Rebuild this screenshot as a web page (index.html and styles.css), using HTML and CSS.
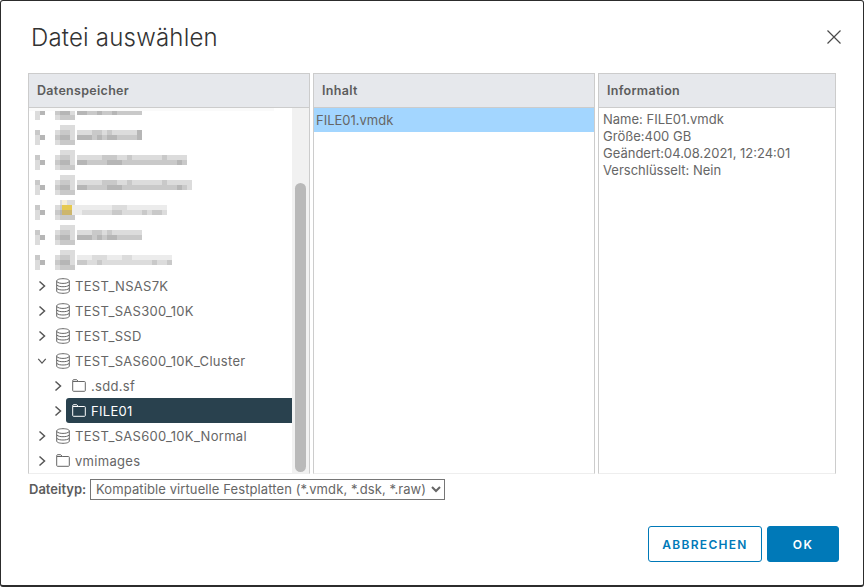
FILE: index.html
```
<!DOCTYPE html>
<html lang="de">
<head>
<meta charset="utf-8">
<title>Datei auswählen</title>
<link rel="stylesheet" href="styles.css">
</head>
<body>
<svg class="defs" width="0" height="0" aria-hidden="true">
  <symbol id="ico-chev" viewBox="0 0 10 12"><path class="stroke" d="M2.500 1.500 7.500 6 2.500 10.500"/></symbol>
  <symbol id="ico-chev-down" viewBox="0 0 12 10"><path class="stroke" d="M1.500 2.500 6 7.500 10.500 2.500"/></symbol>
  <symbol id="ico-db" viewBox="0 0 14 16"><path class="stroke-thin" d="M.7 3C.7 1.500 3.500.7 7 .7s6.300.8 6.300 2.300v10c0 1.500-2.800 2.300-6.300 2.300S.7 14.500.7 13zM.7 3.500C2 5 4.500 5.400 7 5.400s5-.4 6.300-1.900M.7 7C2.300 8.400 4.500 8.700 7 8.700s4.700-.3 6.300-1.700M.7 10.300C2.300 11.700 4.500 12 7 12s4.700-.3 6.300-1.700"/></symbol>
  <symbol id="ico-folder" viewBox="0 0 14 13"><path class="stroke-thin" d="M.7 2.500V1.700C.7 1 1.100.7 1.700.7h3L6.300 2.500h6.200c.5 0 .8.300.8.800v8.200c0 .5-.3.800-.8.800H1.500c-.5 0-.8-.3-.8-.8zM.7 2.500h5.600"/></symbol>
  <symbol id="blur-head" viewBox="0 0 40 20">
    <path class="m1" d="M0 5h5v15H0zM20 5h20v15H20zM25 0h15v5H25z"/>
    <path class="m2" d="M0 5h5v5H0zM5 10h5v5H5zM25 5h10v5H25zM20 10h15v5H20zM25 15h15v5H25z"/>
    <path class="m3" d="M5 10h5v5H5zM25 10h10v5H25z"/>
  </symbol>
</svg>

<main class="dialog">
  <header class="dialog-head">
    <h1 class="dialog-title">Datei auswählen</h1>
    <button class="close" type="button" aria-label="Schließen">
      <svg width="16" height="16" viewBox="0 0 16 16"><path class="stroke-close" d="M1.500 1.500 14.500 14.500M14.500 1.500 1.500 14.500"/></svg>
    </button>
  </header>

  <section class="panels">
    <div class="panel panel-tree">
      <div class="panel-head">Datenspeicher</div>
      <div class="panel-body tree-body">
        <div class="tree-strip"></div>
        <ul class="tree">
          <li class="blur-row">
            <svg width="160" height="25" viewBox="0 0 160 25">
              <use href="#blur-head" x="0" y="2" width="40" height="20"/>
              <path class="m1" d="M42 7h65v10H42z"/><path class="m2" d="M42 12h65v5H42zM52 7h15v5H52z"/><path class="m3" d="M42 12h10v5H42zM62 12h5v5H62zM77 7h5v10H77z"/>
            </svg>
          </li>
          <li class="blur-row">
            <svg width="160" height="25" viewBox="0 0 160 25">
              <use href="#blur-head" x="0" y="2" width="40" height="20"/>
              <path class="m1" d="M42 7h65v10H42z"/><path class="m2" d="M42 12h65v5H42zM57 7h10v5H57zM72 7h5v5H72z"/><path class="m3" d="M42 12h15v5H42zM62 12h5v5H62zM72 12h10v5H72zM102 7h5v10H102z"/>
            </svg>
          </li>
          <li class="blur-row">
            <svg width="160" height="25" viewBox="0 0 160 25">
              <use href="#blur-head" x="0" y="2" width="40" height="20"/>
              <path class="m1" d="M42 7h110v10H42z"/><path class="m2" d="M42 12h110v5H42zM67 7h15v5H67zM92 7h5v5H92zM127 7h5v5H127z"/><path class="m3" d="M42 12h10v5H42zM72 12h15v5H72zM142 12h5v5H142z"/>
            </svg>
          </li>
          <li class="blur-row">
            <svg width="160" height="25" viewBox="0 0 160 25">
              <use href="#blur-head" x="0" y="2" width="40" height="20"/>
              <path class="m1" d="M42 7h115v10H42z"/><path class="m2" d="M42 12h110v5H42zM67 7h15v5H67zM92 7h5v5H92zM127 7h5v5H127z"/><path class="m3" d="M42 12h10v5H42zM72 12h15v5H72zM142 12h5v5H142z"/>
            </svg>
          </li>
          <li class="blur-row">
            <svg width="160" height="25" viewBox="0 0 160 25">
              <use href="#blur-head" x="0" y="2" width="40" height="20"/>
              <path class="y0" d="M27 2h5v5H27z"/><path class="y1" d="M27 7h10v5H27z"/><path class="y2" d="M27 12h10v5H27z"/>
              <path class="m0" d="M37 7h95v10H37z"/><path class="m1" d="M47 12h85v5H47zM77 7h15v5H77z"/><path class="m2" d="M107 12h5v5H107zM77 12h10v5H77zM117 12h10v5H117z"/>
            </svg>
          </li>
          <li class="blur-row">
            <svg width="160" height="25" viewBox="0 0 160 25">
              <use href="#blur-head" x="0" y="2" width="40" height="20"/>
              <path class="m1" d="M42 7h65v10H42z"/><path class="m2" d="M42 12h65v5H42zM57 7h10v5H57zM72 7h5v5H72z"/><path class="m3" d="M42 12h15v5H42zM62 12h5v5H62zM72 12h10v5H72z"/>
            </svg>
          </li>
          <li class="blur-row">
            <svg width="160" height="25" viewBox="0 0 160 25">
              <use href="#blur-head" x="0" y="2" width="40" height="20"/>
              <path class="m0" d="M42 7h95v10H42z"/><path class="m1" d="M42 12h95v5H42zM57 7h15v5H57zM87 7h10v5H87z"/><path class="m2" d="M42 12h10v5H42zM62 12h5v5H62zM117 12h5v5H117zM132 12h5v5H132z"/>
            </svg>
          </li>
          <li class="row"><svg class="chev"><use href="#ico-chev"/></svg><svg class="db"><use href="#ico-db"/></svg><span>TEST_NSAS7K</span></li>
          <li class="row"><svg class="chev"><use href="#ico-chev"/></svg><svg class="db"><use href="#ico-db"/></svg><span>TEST_SAS300_10K</span></li>
          <li class="row"><svg class="chev"><use href="#ico-chev"/></svg><svg class="db"><use href="#ico-db"/></svg><span>TEST_SSD</span></li>
          <li class="row"><svg class="chev"><use href="#ico-chev-down"/></svg><svg class="db"><use href="#ico-db"/></svg><span>TEST_SAS600_10K_Cluster</span></li>
          <li class="row row-child"><svg class="chev"><use href="#ico-chev"/></svg><svg class="folder"><use href="#ico-folder"/></svg><span>.sdd.sf</span></li>
          <li class="row row-child"><svg class="chev"><use href="#ico-chev"/></svg><div class="selected"><svg class="folder"><use href="#ico-folder"/></svg><span>FILE01</span></div></li>
          <li class="row"><svg class="chev"><use href="#ico-chev"/></svg><svg class="db"><use href="#ico-db"/></svg><span>TEST_SAS600_10K_Normal</span></li>
          <li class="row"><svg class="chev"><use href="#ico-chev"/></svg><svg class="folder"><use href="#ico-folder"/></svg><span>vmimages</span></li>
        </ul>
        <div class="scrollbar"><div class="thumb"></div></div>
      </div>
    </div>

    <div class="panel panel-content">
      <div class="panel-head">Inhalt</div>
      <div class="panel-body">
        <div class="file-row">FILE01.vmdk</div>
      </div>
    </div>

    <div class="panel panel-info">
      <div class="panel-head">Information</div>
      <div class="panel-body info-body">
        <div>Name: FILE01.vmdk</div>
        <div>Größe:400 GB</div>
        <div>Geändert:04.08.2021, 12:24:01</div>
        <div>Verschlüsselt: Nein</div>
      </div>
    </div>
  </section>

  <div class="filetype">
    <label class="filetype-label" for="ft">Dateityp:</label>
    <select class="filetype-select" id="ft">
      <option>Kompatible virtuelle Festplatten (*.vmdk, *.dsk, *.raw)</option>
    </select>
  </div>

  <footer class="actions">
    <button class="btn btn-outline" type="button">ABBRECHEN</button>
    <button class="btn btn-primary" type="button">OK</button>
  </footer>
</main>
</body>
</html>
```

FILE: styles.css
```
* { box-sizing: border-box; }

html, body {
  margin: 0;
  height: 100%;
  background: #fff;
}

body {
  font-family: Inter, "Noto Sans", sans-serif;
  font-size: 13px;
  color: #666;
}

.defs { position: absolute; }

.stroke { fill: none; stroke: #565656; stroke-width: 1.500; }
.stroke-thin { fill: none; stroke: currentColor; stroke-width: 1; }
.stroke-close { fill: none; stroke: #4a4a4a; stroke-width: 1.200; }

.m0 { fill: #ececec; }
.m1 { fill: #dcdcdc; }
.m2 { fill: #c9c9c9; }
.m3 { fill: #b6b6b6; }
.y0 { fill: #f6eed6; }
.y1 { fill: #e6c94f; }
.y2 { fill: #cdb66d; }

.dialog {
  width: 864px;
  height: 587px;
  border: 1px solid #2c2c2c;
  border-width: 1px 1px 2px 1px;
  border-radius: 3px;
  padding: 0 24px 23px 27px;
  display: flex;
  flex-direction: column;
  overflow: hidden;
  background: #fff;
}

.dialog-head {
  height: 72px;
  padding: 21px 0 0 3px;
  display: flex;
  justify-content: space-between;
  align-items: flex-start;
}

.dialog-title {
  margin: 0;
  font-size: 24px;
  line-height: 32px;
  font-weight: 300;
  letter-spacing: .2px;
  color: #333;
}

.close {
  border: 0;
  background: none;
  padding: 0;
  margin: 7px -3px 0 0;
  width: 16px;
  height: 16px;
}

.panels {
  display: flex;
  height: 401px;
  gap: 3px;
}

.panel {
  display: flex;
  flex-direction: column;
  border: 1px solid #ccc;
  border-bottom: 1px solid #eee;
  min-width: 0;
}

.panel-tree { width: 282px; }
.panel-content { width: 282px; }
.panel-info { width: 238px; }

.panel-head {
  height: 34px;
  flex: none;
  background: #e6e8ec;
  border-bottom: 1px solid #ccc;
  padding: 0 8px;
  display: flex;
  align-items: center;
  font-size: 12.500px;
  font-weight: 600;
  letter-spacing: .3px;
  color: #5c5c5c;
}

.panel-body {
  flex: 1;
  min-height: 0;
  position: relative;
  overflow: hidden;
}

.tree-strip {
  position: absolute;
  top: 0;
  left: 0;
  width: 245px;
  height: 3px;
  background: #fafafa;
  z-index: 1;
}

.tree {
  list-style: none;
  margin: -10px 0 0;
  padding: 0 17px 0 0;
}

.blur-row {
  height: 25px;
  padding-left: 6px;
  display: flex;
}

.blur-row svg { display: block; }

.row {
  height: 25px;
  display: flex;
  align-items: center;
  padding-left: 8px;
  white-space: nowrap;
  letter-spacing: .3px;
}

.row-child { padding-left: 24px; }

.chev {
  width: 10px;
  height: 12px;
  flex: none;
  margin-right: 9px;
  color: #565656;
}

.db {
  width: 14px;
  height: 16px;
  flex: none;
  margin-right: 5px;
}

.folder {
  width: 14px;
  height: 13px;
  flex: none;
  margin-right: 5px;
}

.selected {
  flex: 1;
  height: 25px;
  margin-left: -6px;
  padding-left: 6px;
  display: flex;
  align-items: center;
  background: #29414e;
  border-radius: 3px 0 0 3px;
  color: #fff;
}

.scrollbar {
  position: absolute;
  top: 0;
  right: 0;
  bottom: 0;
  width: 17px;
  background: #f1f1f1;
}

.thumb {
  position: absolute;
  top: 75px;
  bottom: 1px;
  left: 3px;
  width: 11px;
  border-radius: 6px;
  background: #b9b9b9;
}

.file-row {
  height: 24px;
  background: #a3d6ff;
  padding-left: 2px;
  display: flex;
  align-items: center;
}

.info-body {
  padding: 3px 4px;
  line-height: 17px;
}

.filetype {
  display: flex;
  align-items: center;
  margin-top: 5px;
  padding-left: 1px;
  height: 20px;
}

.filetype-label {
  width: 61px;
  font-size: 13px;
  font-weight: 600;
  color: #5c5c5c;
}

.filetype-select {
  width: 355px;
  height: 21px;
  font-family: inherit;
  font-size: 13px;
  letter-spacing: .1px;
  color: #666;
  background: #fff;
  border: 1px solid #767676;
  padding: 0 0 0 1px;
}

.actions {
  margin-top: auto;
  display: flex;
  justify-content: flex-end;
  gap: 5px;
}

.btn {
  height: 36px;
  border-radius: 3px;
  font-family: inherit;
  font-size: 12px;
  font-weight: 600;
  letter-spacing: 1.300px;
  border: 1px solid #0079b8;
  padding: 0;
}

.btn-outline {
  width: 114px;
  background: #fff;
  color: #0079b8;
}

.btn-primary {
  width: 72px;
  background: #0079b8;
  color: #fff;
}
```
